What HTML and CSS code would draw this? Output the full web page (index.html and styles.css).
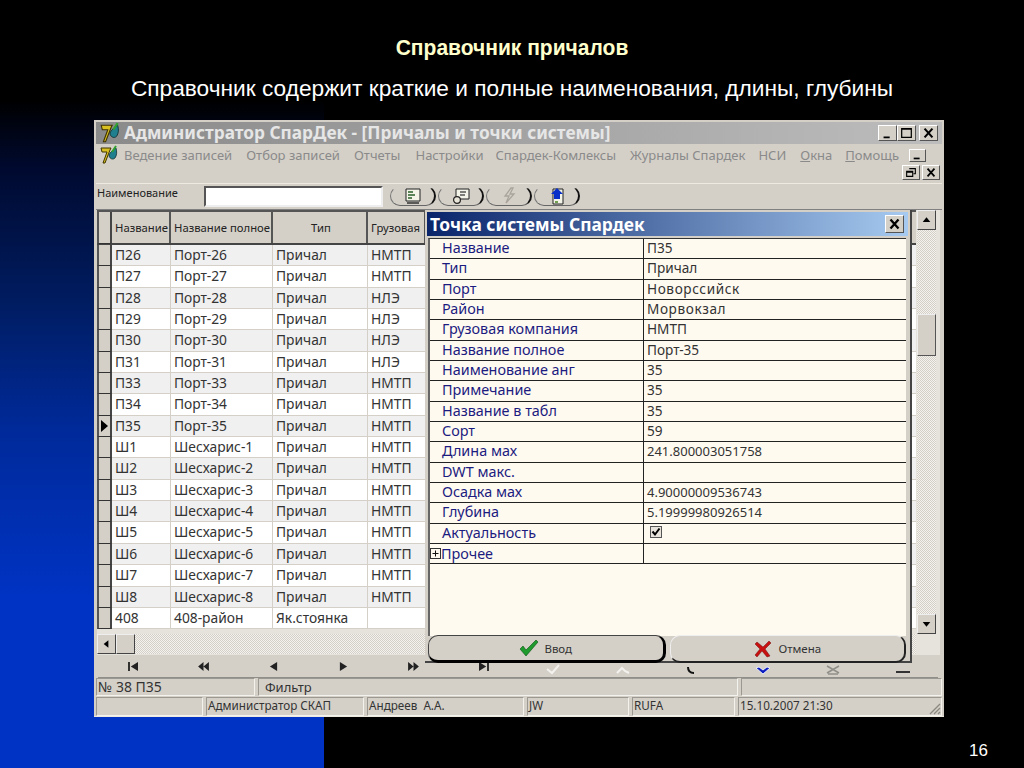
FILE: index.html
```html
<!DOCTYPE html>
<html lang="ru">
<head>
<meta charset="utf-8">
<title>Справочник причалов</title>
<link rel="stylesheet" href="styles.css">
</head>
<body>
<header class="head">
  <h1 class="slide-title">Справочник причалов</h1>
  <p class="slide-sub">Справочник содержит краткие и полные наименования, длины, глубины</p>
</header>

<main class="win">
  <div class="titlebar">
    <svg class="logo" viewBox="0 0 20 20"><path d="M2 3h10l-1 2-5 13H4l4-11H3z" fill="#d8c020" stroke="#403400" stroke-width="1"/><path d="M10 11c0-3 3-5 7-8 1 4 1 7-1 10-2 2-5 1-6-2z" fill="#1f7f8f" stroke="#103030" stroke-width=".8"/><path d="M13 7l4-6" stroke="#30a030" stroke-width="2"/></svg>
    <span class="title-text">Администратор СпарДек - [Причалы и точки системы]</span>
    <span class="wbtns">
      <span class="wbtn"><svg viewBox="0 0 19 16"><path d="M5 12h7v2H5z" fill="#000"/></svg></span>
      <span class="wbtn"><svg viewBox="0 0 19 16"><path d="M4 3h11v10H4z M4 3.5h11" fill="none" stroke="#000" stroke-width="1.4"/></svg></span>
      <span class="wbtn wbtn-gap"><svg viewBox="0 0 19 16"><path d="M5 3l9 10M14 3l-9 10" stroke="#000" stroke-width="2.4"/></svg></span>
    </span>
  </div>

  <nav class="menubar">
    <svg class="logo logo-menu" viewBox="0 0 20 20"><path d="M2 3h10l-1 2-5 13H4l4-11H3z" fill="#d8c020" stroke="#403400" stroke-width="1"/><path d="M10 11c0-3 3-5 7-8 1 4 1 7-1 10-2 2-5 1-6-2z" fill="#1f7f8f" stroke="#103030" stroke-width=".8"/><path d="M13 7l4-6" stroke="#30a030" stroke-width="2"/></svg>
    <span class="mi m1">Ведение записей</span>
    <span class="mi m2">Отбор записей</span>
    <span class="mi m3">Отчеты</span>
    <span class="mi m4">Настройки</span>
    <span class="mi m5">Спардек-Комлексы</span>
    <span class="mi m6">Журналы Спардек</span>
    <span class="mi m7">НСИ</span>
    <span class="mi m8"><u>О</u>кна</span>
    <span class="mi m9"><u>П</u>омощь</span>
    <span class="wbtn mdi-min"><svg viewBox="0 0 17 13"><path d="M4 9h7v2H4z" fill="#000"/></svg></span>
  </nav>
  <div class="mdi-row">
    <span class="wbtn mdi"><svg viewBox="0 0 18 15"><path d="M7 3h7v6h-2M4 6h7v6H4zM4 7h7" fill="none" stroke="#000" stroke-width="1.3"/></svg></span>
    <span class="wbtn mdi"><svg viewBox="0 0 18 15"><path d="M5 3l8 9M13 3l-8 9" stroke="#000" stroke-width="2"/></svg></span>
  </div>

  <div class="toolbar">
    <span class="tb-label">Наименование</span>
    <span class="tb-input"></span>
    <span class="pill">
      <svg viewBox="0 0 20 18"><path d="M3 2h14v12H3z" fill="#f4f4e8" stroke="#222"/><path d="M5 5h5M5 8h7M5 11h4" stroke="#286028" stroke-width="1.4"/><path d="M4 16h12" stroke="#333" stroke-width="1.5"/></svg>
    </span>
    <span class="pill">
      <svg viewBox="0 0 20 18"><path d="M5 2h13v10H5z" fill="#f4f4e8" stroke="#222"/><path d="M9 5h6M9 8h5" stroke="#555" stroke-width="1.3"/><circle cx="6" cy="13" r="3.4" fill="#e8e4d8" stroke="#222" stroke-width="1.2"/></svg>
    </span>
    <span class="pill">
      <svg viewBox="0 0 20 18"><path d="M12 1L6 9h4l-3 7 8-9h-4l3-6z" fill="none" stroke="#a8a49c" stroke-width="1.3"/></svg>
    </span>
    <span class="pill">
      <svg viewBox="0 0 20 18"><path d="M6 2h10v15H6z" fill="#f4f4e8" stroke="#222"/><path d="M10 1l6 6h-3v5H7V7H4z" fill="#0830c8"/><path d="M8 14h3v2H8z" fill="#70a050"/></svg>
    </span>
  </div>

  <div class="work">
    <div class="gridbox">
      <div class="grid">
        <div class="row hdr"><span class="ind"></span><span class="c">Название</span><span class="c">Название полное</span><span class="c ctr">Тип</span><span class="c">Грузовая</span></div>
        <div class="row alt"><span class="ind"></span><span class="c">П26</span><span class="c">Порт-26</span><span class="c">Причал</span><span class="c">НМТП</span></div>
        <div class="row"><span class="ind"></span><span class="c">П27</span><span class="c">Порт-27</span><span class="c">Причал</span><span class="c">НМТП</span></div>
        <div class="row alt"><span class="ind"></span><span class="c">П28</span><span class="c">Порт-28</span><span class="c">Причал</span><span class="c">НЛЭ</span></div>
        <div class="row"><span class="ind"></span><span class="c">П29</span><span class="c">Порт-29</span><span class="c">Причал</span><span class="c">НЛЭ</span></div>
        <div class="row alt"><span class="ind"></span><span class="c">П30</span><span class="c">Порт-30</span><span class="c">Причал</span><span class="c">НЛЭ</span></div>
        <div class="row"><span class="ind"></span><span class="c">П31</span><span class="c">Порт-31</span><span class="c">Причал</span><span class="c">НЛЭ</span></div>
        <div class="row alt"><span class="ind"></span><span class="c">П33</span><span class="c">Порт-33</span><span class="c">Причал</span><span class="c">НМТП</span></div>
        <div class="row"><span class="ind"></span><span class="c">П34</span><span class="c">Порт-34</span><span class="c">Причал</span><span class="c">НМТП</span></div>
        <div class="row alt"><span class="ind cur"><svg viewBox="0 0 7 12"><path d="M0 0l7 6-7 6z" fill="#000"/></svg></span><span class="c">П35</span><span class="c">Порт-35</span><span class="c">Причал</span><span class="c">НМТП</span></div>
        <div class="row"><span class="ind"></span><span class="c">Ш1</span><span class="c">Шесхарис-1</span><span class="c">Причал</span><span class="c">НМТП</span></div>
        <div class="row alt"><span class="ind"></span><span class="c">Ш2</span><span class="c">Шесхарис-2</span><span class="c">Причал</span><span class="c">НМТП</span></div>
        <div class="row"><span class="ind"></span><span class="c">Ш3</span><span class="c">Шесхарис-3</span><span class="c">Причал</span><span class="c">НМТП</span></div>
        <div class="row alt"><span class="ind"></span><span class="c">Ш4</span><span class="c">Шесхарис-4</span><span class="c">Причал</span><span class="c">НМТП</span></div>
        <div class="row"><span class="ind"></span><span class="c">Ш5</span><span class="c">Шесхарис-5</span><span class="c">Причал</span><span class="c">НМТП</span></div>
        <div class="row alt"><span class="ind"></span><span class="c">Ш6</span><span class="c">Шесхарис-6</span><span class="c">Причал</span><span class="c">НМТП</span></div>
        <div class="row"><span class="ind"></span><span class="c">Ш7</span><span class="c">Шесхарис-7</span><span class="c">Причал</span><span class="c">НМТП</span></div>
        <div class="row alt"><span class="ind"></span><span class="c">Ш8</span><span class="c">Шесхарис-8</span><span class="c">Причал</span><span class="c">НМТП</span></div>
        <div class="row"><span class="ind"></span><span class="c">408</span><span class="c">408-район</span><span class="c">Як.стоянка</span><span class="c"></span></div>
      </div>
      <div class="hscroll">
        <span class="sbtn"><svg viewBox="0 0 18 18"><path d="M11 5v8L6 9z" fill="#000"/></svg></span>
        <span class="sbtn sthumb-h"></span>
      </div>
    </div>
    <div class="vscroll">
      <span class="sbtn"><svg viewBox="0 0 18 18"><path d="M5 11h8L9 6z" fill="#000"/></svg></span>
      <span class="vtrack"><span class="sthumb-v"></span></span>
      <span class="sbtn"><svg viewBox="0 0 18 18"><path d="M5 7h8l-4 5z" fill="#000"/></svg></span>
    </div>
  </div>

  <div class="navbar">
    <span class="nv"><svg viewBox="0 0 14 10"><path d="M1 0h2v10H1zM12 0v10L4 5z" fill="#222"/></svg></span>
    <span class="nv"><svg viewBox="0 0 14 10"><path d="M7 0v10L1 5zM13 0v10L7 5z" fill="#222"/></svg></span>
    <span class="nv"><svg viewBox="0 0 14 10"><path d="M11 0v10L3 5z" fill="#222"/></svg></span>
    <span class="nv"><svg viewBox="0 0 14 10"><path d="M3 0v10l8-5z" fill="#222"/></svg></span>
    <span class="nv"><svg viewBox="0 0 14 10"><path d="M1 0v10l6-5zM7 0v10l6-5z" fill="#222"/></svg></span>
    <span class="nv"><svg viewBox="0 0 14 10"><path d="M2 0v10l8-5zM11 0h2v10h-2z" fill="#222"/></svg></span>
    <span class="nv"><svg class="tall" viewBox="0 0 16 20"><path d="M2 14l5 4 7-8" fill="none" stroke="#f4f2ee" stroke-width="2"/></svg></span>
    <span class="nv"><svg class="tall" viewBox="0 0 16 20"><path d="M2 18l5-5 3 3 4 2" fill="none" stroke="#f4f2ee" stroke-width="2"/></svg></span>
    <span class="nv"><svg class="tall" viewBox="0 0 16 20"><path d="M3 12c0 4 2 6 6 6" fill="none" stroke="#111" stroke-width="2"/></svg></span>
    <span class="nv"><svg class="tall" viewBox="0 0 16 20"><path d="M1 13l7 6 7-6-3-1-4 3-4-3z" fill="#1020c0" stroke="#fff" stroke-width=".8"/></svg></span>
    <span class="nv"><svg class="tall" viewBox="0 0 16 20"><path d="M2 11l12 7M14 11L2 18M3 19h10" stroke="#908e88" stroke-width="1.5"/></svg></span>
    <span class="nv"><svg class="tall" viewBox="0 0 16 20"><path d="M1 16h14v2H1z" fill="#333"/></svg></span>
  </div>

  <div class="status s1">
    <span class="st st-a">№ 38 П35</span>
    <span class="st st-b">Фильтр</span>
    <span class="st st-c"></span>
  </div>
  <div class="status s2">
    <span class="st t1"></span>
    <span class="st t2">Администратор СКАП</span>
    <span class="st t3">Андреев&nbsp; А.А.</span>
    <span class="st t4">JW</span>
    <span class="st t5">RUFA</span>
    <span class="st t6">15.10.2007 21:30
      <svg class="grip" viewBox="0 0 13 13"><path d="M12 2L2 12M12 6l-6 6M12 10l-2 2" stroke="#8a8880" stroke-width="1.3"/></svg>
    </span>
  </div>

  <section class="popup">
    <div class="pop-title"><span>Точка системы Спардек</span>
      <span class="wbtn pop-x"><svg viewBox="0 0 19 18"><path d="M5 4l9 10M14 4L5 14" stroke="#000" stroke-width="2.6"/></svg></span>
    </div>
    <div class="props">
      <div class="prop"><span class="pk">Название</span><span class="pv">П35</span></div>
      <div class="prop"><span class="pk">Тип</span><span class="pv">Причал</span></div>
      <div class="prop"><span class="pk">Порт</span><span class="pv wide">Новорссийск</span></div>
      <div class="prop"><span class="pk">Район</span><span class="pv wide">Морвокзал</span></div>
      <div class="prop"><span class="pk">Грузовая компания</span><span class="pv">НМТП</span></div>
      <div class="prop"><span class="pk">Название полное</span><span class="pv">Порт-35</span></div>
      <div class="prop"><span class="pk">Наименование анг</span><span class="pv">35</span></div>
      <div class="prop"><span class="pk">Примечание</span><span class="pv">35</span></div>
      <div class="prop"><span class="pk">Название в табл</span><span class="pv">35</span></div>
      <div class="prop"><span class="pk">Сорт</span><span class="pv">59</span></div>
      <div class="prop"><span class="pk">Длина мах</span><span class="pv num">241.800003051758</span></div>
      <div class="prop"><span class="pk">DWT макс.</span><span class="pv"></span></div>
      <div class="prop"><span class="pk">Осадка мах</span><span class="pv num">4.90000009536743</span></div>
      <div class="prop"><span class="pk">Глубина</span><span class="pv num">5.19999980926514</span></div>
      <div class="prop"><span class="pk">Актуальность</span><span class="pv"><svg class="chk" viewBox="0 0 12 12"><rect x=".5" y=".5" width="11" height="11" fill="#e8e4dc" stroke="#555"/><path d="M2.5 5.5l2.5 3 4.5-6" fill="none" stroke="#000" stroke-width="2"/></svg></span></div>
      <div class="prop"><span class="pk pk-tree"><svg class="plus" viewBox="0 0 11 11"><rect x=".5" y=".5" width="10" height="10" fill="none" stroke="#333"/><path d="M2.5 5.5h6M5.5 2.5v6" stroke="#111"/></svg>Прочее</span><span class="pv"></span></div>
    </div>
    <div class="pop-btns">
      <span class="pbtn"><svg viewBox="0 0 20 18"><path d="M1 10l3-3 3 4L17 1l2 2L7 17z" fill="#1f9a2c" stroke="#0a5012" stroke-width=".6"/></svg>Ввод</span>
      <span class="pbtn"><svg viewBox="0 0 18 18"><path d="M3 2l6 5 6-6 2 2-6 6 5 7-3 1-5-6-5 6-2-2 5-6-5-5z" fill="#c81010" stroke="#701010" stroke-width=".5"/></svg>Отмена</span>
    </div>
  </section>
</main>

<footer class="foot">16</footer>
</body>
</html>
```

FILE: styles.css
```css
* { box-sizing: border-box; }
html, body { margin: 0; padding: 0; }
body {
  width: 1024px;
  height: 768px;
  overflow: hidden;
  display: flex;
  flex-direction: column;
  font-family: "Noto Sans", "Liberation Sans", sans-serif;
  background-color: #000;
  background-image:
    linear-gradient(to right, transparent 324px, #000 324px),
    linear-gradient(to bottom, #000 100px, #000a30 170px, #001c60 300px, #002a9a 430px, #0033c4 600px, #0033c4 100%);
}
.head { height: 120px; text-align: center; flex: none; }
.slide-title {
  margin: 0;
  padding-top: 35px;
  height: 74px;
  font: bold 22px/26px "Liberation Sans", sans-serif;
  color: #ffffcc;
  display: block;
  transform: scaleX(.955);
}
.slide-sub {
  margin: 0;
  font: 22.7px/28px "Liberation Sans", sans-serif;
  color: #fff;
}

.win {
  position: relative;
  flex: none;
  width: 850px;
  height: 597px;
  margin-left: 94px;
  background: #d4d0c8;
  padding: 2px 0 0 2px;
  border-bottom: 1px solid #eeeae2;
}
.titlebar {
  height: 22px;
  width: 846px;
  display: flex;
  align-items: center;
  padding-left: 3px;
  background: linear-gradient(to right, #8a8a8a, #a8a8a8 60%, #bdbdbd);
}
.logo { width: 22px; height: 22px; flex: none; }
.title-text {
  margin-left: 3px;
  font: bold 17.25px/22px "Noto Sans", sans-serif;
  color: #e6e6e6;
  white-space: nowrap;
}
.wbtns { margin-left: auto; display: flex; margin-right: 4px; }
.wbtn {
  width: 19px;
  height: 16px;
  flex: none;
  display: block;
  background: #d4d0c8;
  border: 1px solid;
  border-color: #fff #555 #555 #fff;
}
.wbtn svg { display: block; width: 100%; height: 100%; }
.wbtn-gap { margin-left: 3px; }

.menubar {
  height: 22px;
  width: 846px;
  position: relative;
  display: flex;
  align-items: center;
  font-size: 13px;
  color: #8a8a8a;
  white-space: nowrap;
  padding-left: 3px;
}
.logo-menu { width: 20px; height: 20px; }
.mi { display: block; }
.m1 { margin-left: 5px; }
.m2 { margin-left: 14px; }
.m3 { margin-left: 14px; }
.m4 { margin-left: 15px; }
.m5 { margin-left: 12px; }
.m6 { margin-left: 14px; }
.m7 { margin-left: 13px; }
.m8 { margin-left: 14px; }
.m9 { margin-left: 13px; }
.mdi-min { width: 17px; height: 13px; margin-left: 10px; }
.mdi-row {
  height: 17px;
  width: 846px;
  display: flex;
  justify-content: flex-end;
  gap: 2px;
  padding-right: 2px;
  margin-top: -1px;
}
.mdi { width: 18px; height: 15px; }

.toolbar {
  height: 27px;
  width: 846px;
  margin-top: 1px;
  display: flex;
  align-items: center;
  gap: 2px;
  border-top: 1px solid #eeeae2;
  border-bottom: 1px solid #808080;
  position: relative;
}
.tb-label { width: 106px; padding-left: 1px; font-size: 11px; color: #222; margin-top: -8px; }
.tb-input {
  width: 179px;
  height: 21px;
  background: #fff;
  border: 2px solid;
  border-color: #555 #eee #eee #555;
  margin-right: 5px;
}
.pill {
  width: 46px;
  height: 20px;
  margin-top: -2px;
  background: #d4d0c8;
  border-radius: 10px;
  border: 1px solid;
  border-color: #d4d0c8 #111 #666 #777;
  border-right-width: 2px;
  display: flex;
  align-items: center;
  justify-content: center;
}
.pill svg { width: 20px; height: 18px; }

.work {
  height: 445px;
  width: 843px;
  margin-left: 1px;
  display: flex;
  background: #e6e3dc;
}
.gridbox { width: 819px; height: 445px; display: flex; flex-direction: column; }
.grid { height: 419px; overflow: hidden; width: 819px; font-size: 13.8px; color: #333; background: #eeece6; }
.row {
  display: grid;
  grid-template-columns: 15px 59px 102px 95px 58px;
  height: 21.35px;
  background: #fff;
  border-bottom: 1px solid #d4d0c8;
}
.row.alt { background: #f0f0f0; }
.row.hdr {
  height: 35px;
  background: #d4d0c8;
  border-top: 2px solid #555;
  border-bottom: 2px solid #444;
  font-size: 11.3px;
  color: #222;
}
.hdr .c { border-right: 2px solid #555; background: #d4d0c8; line-height: 31px; }
.hdr .ind { border-right: 2px solid #444; }
.ctr { text-align: center; }
.ind {
  background: #d4d0c8;
  border-left: 2px solid #555;
  border-right: 2px solid #444;
  border-bottom: 1px solid #333;
  margin-bottom: -1px;
  display: flex;
  align-items: center;
  justify-content: center;
}
.cur svg { width: 7px; height: 12px; }
.c {
  padding-left: 3px;
  line-height: 20px;
  border-right: 1px solid #d4d0c8;
  white-space: nowrap;
  overflow: hidden;
}
.hscroll {
  height: 20px;
  margin-top: 5px;
  display: flex;
  background: repeating-conic-gradient(#d4d0c8 0 25%, #f4f2ee 0 50%) 0 0 / 2px 2px;
}
.sbtn {
  width: 19px;
  height: 20px;
  flex: none;
  display: block;
  background: #d4d0c8;
  border: 1px solid;
  border-color: #eee #444 #444 #eee;
}
.sbtn svg { display: block; width: 100%; height: 100%; }
.sthumb-h { width: 19px; }
.vscroll {
  width: 19px;
  margin-left: 1px;
  height: 424px;
  display: flex;
  flex-direction: column;
}
.vtrack {
  flex: 1;
  background: repeating-conic-gradient(#d4d0c8 0 25%, #f4f2ee 0 50%) 0 0 / 2px 2px;
  padding-top: 84px;
  display: block;
}
.sthumb-v {
  display: block;
  height: 42px;
  width: 100%;
  background: #d4d0c8;
  border: 1px solid;
  border-color: #eee #555 #555 #eee;
}

.navbar {
  height: 23px;
  width: 840px;
  margin-left: 2px;
  display: grid;
  grid-template-columns: repeat(12, 70px);
  align-items: center;
  border-bottom: 1px solid #908e88;
}
.nv { display: flex; justify-content: center; align-items: center; height: 22px; overflow: hidden; }
.nv svg { width: 13px; height: 9px; }
.nv svg.tall { width: 16px; height: 20px; margin-top: -2px; }

.status { display: flex; width: 846px; font-size: 13px; color: #333; }
.s1 { height: 18px; gap: 3px; }
.s2 { height: 20px; gap: 3px; font-size: 11.7px; padding-top: 1px; line-height: 15px; }
.st {
  display: block;
  border: 1px solid;
  border-color: #9a9890 #f4f2ec #f4f2ec #9a9890;
  line-height: inherit;
  padding-left: 1px;
  white-space: nowrap;
  position: relative;
}
.s1 .st { line-height: 16px; }
.st-a { width: 159px; font-size: 14px; }
.st-b { width: 480px; padding-left: 6px; }
.st-c { flex: 1; }
.t1 { width: 107px; }
.t2 { width: 158px; }
.t3 { width: 157px; }
.t4 { width: 102px; }
.t5 { width: 103px; }
.t6 { flex: 1; }
.grip { position: absolute; right: 0; bottom: 0; width: 13px; height: 13px; }

.popup {
  position: absolute;
  left: 331px;
  top: 90px;
  width: 487px;
  height: 453px;
  background: #d4d0c8;
  padding: 2px 4px 0 3px;
  border-right: 2px solid #444;
  border-bottom: 2px solid #444;
}
.pop-title {
  height: 24px;
  margin: 0 -2px 0 -1px;
  padding-left: 3px;
  display: flex;
  align-items: center;
  justify-content: space-between;
  background: linear-gradient(to right, #0a246a, #a6caf0);
  color: #fff;
  font-weight: bold;
  font-size: 17.4px;
  white-space: nowrap;
}
.pop-x { width: 19px; height: 18px; margin-right: 4px; }
.props {
  height: 398px;
  margin-top: 2px;
  background: #fffaf0;
  border-left: 2px solid #666;
  border-top: 1px solid #333;
  font-size: 13.6px;
}
.prop {
  display: grid;
  grid-template-columns: 214px 264px;
  height: 20.33px;
  border-bottom: 1px solid #222;
  line-height: 18px;
  white-space: nowrap;
}
.pk { color: #1c1c80; padding-left: 12px; border-right: 1px solid #222; font-size: 14.4px; }
.pk-tree { padding-left: 0; display: flex; align-items: center; }
.pv { color: #333; padding-left: 3px; }
.pv.num { font-size: 13px; }
.pv.wide { letter-spacing: .6px; }
.chk { width: 12px; height: 12px; display: block; margin: 2px 0 0 3px; }
.plus { width: 11px; height: 11px; flex: none; }
.pop-btns {
  display: flex;
  gap: 4px;
  height: 28px;
  margin-top: -1px;
}
.pbtn {
  flex: 1;
  display: flex;
  align-items: center;
  justify-content: center;
  gap: 5px;
  background: #d4d0c8;
  font-size: 11.5px;
  color: #333;
  border: 1px solid;
  border-color: #444 #000 #000 #444;
  border-width: 1px 3px 3px 1px;
  border-radius: 10px;
}
.pbtn svg { width: 20px; height: 18px; }
.pbtn + .pbtn { border-color: #eee #222 #222 #eee; border-width: 1px 2px 2px 1px; }

.foot {
  flex: 1;
  text-align: right;
  padding: 24px 36px 0 0;
  color: #fff;
  font: 17px/20px "Liberation Sans", sans-serif;
}
```
